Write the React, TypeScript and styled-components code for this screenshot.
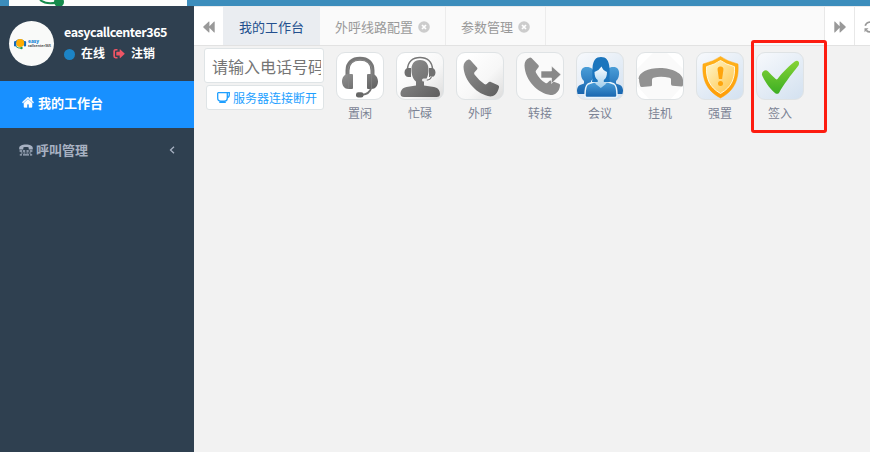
import React from 'react';
import styled, { createGlobalStyle, css } from 'styled-components';

const GlobalStyle = createGlobalStyle`
  * { box-sizing: border-box; }
  body {
    margin: 0;
    overflow: hidden;
    background: #f2f2f2;
    font-family: "Noto Sans", "Noto Sans CJK SC", sans-serif;
    font-size: 13px;
  }
  svg { display: block; flex: none; }
`;

const Page = styled.div`
  display: flex;
  flex-direction: column;
  width: 870px;
  height: 452px;
  overflow: hidden;
`;

const TopBar = styled.header`
  flex: none;
  height: 6px;
  padding-left: 9px;
  background: #3c8dbc;
`;

const LogoStrip = styled.div`
  width: 178px;
  height: 6px;
  padding-left: 30px;
  background: #fcfdfc;
`;

const Body = styled.div`
  display: flex;
  flex: 1;
  min-height: 0;
`;

const Sidebar = styled.aside`
  flex: none;
  width: 194px;
  background: #2f4050;
`;

const Profile = styled.div`
  display: flex;
  height: 75px;
  padding: 15px 0 0 9px;
`;

const Avatar = styled.div`
  flex: none;
  width: 45px;
  height: 45px;
  border-radius: 50%;
  background: #f9faf9;
`;

const ProfileText = styled.div`
  padding-left: 10px;
  color: #fff;
  font-weight: 600;
`;

const UserName = styled.div`
  height: 22px;
  line-height: 21px;
  font-family: "Noto Sans CJK SC", sans-serif;
  font-size: 12.5px;
  font-weight: 700;
  letter-spacing: -0.46px;
  white-space: nowrap;
`;

const StatusRow = styled.div`
  display: flex;
  align-items: center;
  height: 22px;
  font-size: 12px;
  line-height: 22px;
  white-space: nowrap;
`;

const StatusDot = styled.i`
  width: 11px;
  height: 11px;
  margin-right: 6px;
  border-radius: 50%;
  background: #1c84c6;
`;

const LogoutIcon = styled.span`
  margin: 0 6px 0 8px;
`;

const MenuItem = styled.div<{ $active?: boolean }>`
  display: flex;
  align-items: center;
  height: 47px;
  padding: 0 18px 4px 19px;
  color: #a7b1c2;
  font-weight: 600;
  gap: 3px;
  ${p => p.$active && css`
    padding: 0 22px 4px;
    gap: 4px;
    color: #fff;
    background: #1890ff;
  `}
`;

const MenuArrow = styled.span`
  margin-left: auto;
  margin-right: 1px;
`;

const Main = styled.main`
  flex: none;
  width: 676px;
`;

const TabBar = styled.nav`
  display: flex;
  height: 40px;
  background: #fafafa;
  border-top: 1px solid #e8eaec;
  border-bottom: 1px solid #e2e2e2;
  overflow: hidden;
`;

const ScrollButton = styled.button<{ $width: number; $edge?: boolean }>`
  display: flex;
  align-items: center;
  justify-content: center;
  flex: none;
  width: ${p => p.$width}px;
  height: 39px;
  padding: 0;
  border: 0;
  border-left: ${p => (p.$edge ? '1px solid #e8e8e8' : '0')};
  background: #fff;
  color: #999;
`;

const Tabs = styled.div`
  display: flex;
  flex: none;
  width: 601px;
`;

const Tab = styled.div<{ $active?: boolean }>`
  display: flex;
  align-items: center;
  gap: 5px;
  height: 39px;
  padding: 0 15px;
  border-right: 1px solid #ececec;
  color: #999;
  white-space: nowrap;
  ${p => p.$active && css`
    padding: 0 15px 0 16px;
    border-color: #eaedf1;
    color: #23508e;
    background: #eaedf1;
  `}
`;

const Toolbar = styled.section`
  display: flex;
  padding: 2px 0 0 10px;
`;

const DialColumn = styled.div`
  display: flex;
  flex-direction: column;
  align-items: flex-end;
  width: 120px;
  margin-right: 12px;
`;

const PhoneInput = styled.input`
  width: 120px;
  height: 35px;
  padding: 3px 2px 0 7px;
  border: 1px solid #dfe4e6;
  border-radius: 3px;
  outline: 0;
  background: #fff;
  font-family: inherit;
  font-size: 16px;
  &::placeholder { color: #757575; opacity: 1; }
`;

const ConnectionState = styled.div`
  display: flex;
  align-items: center;
  gap: 3px;
  width: 118px;
  height: 25px;
  margin-top: 2px;
  padding: 1px 0 0 10px;
  border: 1px solid #dfe4e6;
  border-radius: 3px;
  background: #fff;
  color: #1e9fff;
  font-size: 12px;
  white-space: nowrap;
`;

const Actions = styled.div`
  display: flex;
  gap: 12px;
  padding-top: 4px;
`;

const Action = styled.div`
  position: relative;
  width: 48px;
`;

const tones = {
  white: '#fff',
  gray: 'linear-gradient(135deg, #fff 15%, #f7f7f7 60%, #dcdcdc)',
  soft: '#fafafa',
  blue: 'linear-gradient(145deg, #f7f9fc, #d3e1f0)',
};

const ActionTile = styled.div<{ $tone: keyof typeof tones }>`
  width: 48px;
  height: 48px;
  border: 1px solid #dfe3e5;
  border-radius: 9px;
  overflow: hidden;
  background: ${p => tones[p.$tone]};
  & > svg { margin: -1px; }
`;

const ActionLabel = styled.div`
  height: 28px;
  line-height: 28px;
  text-align: center;
  color: #7b8294;
  font-size: 12px;
`;

const Highlight = styled.div`
  position: absolute;
  left: -5px;
  top: -12px;
  width: 76px;
  height: 93px;
  border: 3px solid #fd1c10;
  border-radius: 3px;
  pointer-events: none;
`;

const HomeIcon = () => (
  <svg width="12" height="11" viewBox="50 250 1692 1350" preserveAspectRatio="none" fill="currentColor" stroke="currentColor" strokeWidth="40">
    <path d="M1472 992v480q0 26-19 45t-45 19h-384v-384h-256v384h-384q-26 0-45-19t-19-45v-480q0-1 .5-3t.5-3l575-474 575 474q1 2 1 6zm223-69l-62 74q-8 9-21 11h-3q-13 0-21-7l-692-577-692 577q-12 8-24 7-13-2-21-11l-62-74q-8-10-7-23.5t11-21.5l719-599q32-26 76-26t76 26l244 204v-195q0-14 9-23t23-9h192q14 0 23 9t9 23v408l219 182q10 8 11 21.5t-7 23.5z" />
  </svg>
);

const TtyIcon = () => (
  <svg width="14" height="12" viewBox="0 0 14 12" fill="currentColor">
    <path d="M.2 4.200C.2 1.800 3 .6 7 .6s6.800 1.200 6.800 3.600v.7q0 .6-.6.6h-2.900q-.6 0-.6-.6V3.500C8 2.900 6 2.900 4.300 3.500v1.400q0 .6-.6.6H.8q-.6 0-.6-.6z" />
    <path d="M.6 6.300h2.600v1.500H.6zM4 6.300h2.200v1.500H4zM7.500 6.300h2.200v1.500H7.500zM10.800 6.300h2.600v1.500h-2.600zM1.800 8.400h1.800v1.200H1.800zM4.400 8.400h2v1.200h-2zM7.400 8.400h2v1.200h-2zM10.300 8.400h1.900v1.200h-1.900zM.8 10.200H3v1.400H.8zM4 10.200h6v1.400H4zM11 10.200h2.200v1.400H11z" />
  </svg>
);

const SignOutIcon = () => (
  <svg width="12" height="12" viewBox="0 0 12 12" fill="#ed5565">
    <path d="M4.500 1v1.500H2.900q-.9 0-.9.900v4.600q0 .9.900.9h1.600v1.500H2.600Q.3 10.400.3 8.300V3.100Q.3 1 2.600 1z" />
    <path d="M3.700 3.800h3V1.600q0-.7.600-.2l4.300 4q.3.300 0 .6l-4.300 4q-.6.500-.6-.2V7.600h-3q-.4 0-.4-.4v-3q0-.4.400-.4z" />
  </svg>
);

const DoubleArrow = ({ forward }: { forward?: boolean }) => (
  <svg width="12" height="12" viewBox="0 0 12 12" fill="currentColor">
    {forward
      ? <path d="M.3.8Q.3.200.9.600L5.600 5.200V.8q0-.6.600-.2l5.400 5q.3.400 0 .8l-5.400 5q-.6.400-.6-.2V6.800L.9 11.400q-.6.400-.6-.2z" />
      : <path d="M11.700.8q0-.6-.6-.2L6.400 5.200V.8q0-.6-.6-.2l-5.400 5q-.3.400 0 .8l5.400 5q.6.400.6-.2V6.800l4.700 4.600q.6.400.6-.2z" />}
  </svg>
);

const CloseIcon = () => (
  <svg width="12" height="12" viewBox="0 0 12 12">
    <circle cx="6" cy="6" r="5.800" fill="#ccc" />
    <path d="M4 4l4 4M8 4L4 8" stroke="#fff" strokeWidth="1.700" />
  </svg>
);

const RefreshIcon = () => (
  <svg width="12" height="12" viewBox="0 0 12 12" fill="none" stroke="currentColor" strokeWidth="1.700">
    <path d="M1.200 4.800A5 5 0 0 1 9.700 2.700M10.800 7.200A5 5 0 0 1 2.300 9.300" />
    <path d="M11.500.8v4h-4zM.5 11.200v-4h4z" fill="currentColor" stroke="none" />
  </svg>
);

const CupIcon = () => (
  <svg width="13" height="12" viewBox="0 0 13 12" fill="none" stroke="currentColor" strokeWidth="1.300">
    <path d="M.7 .7h11.600v2q0 2.600-2.500 3.300M10.300 .7v5.200q0 3.200-3 3.200H3.700q-3 0-3-3.200V.7M2.300 10.300h6.500" />
  </svg>
);

const AvatarLogo = () => (
  <svg width="45" height="45" viewBox="0 0 45 45">
    <path d="M6.400 22A5 5 0 0 1 15.600 22" fill="none" stroke="#166bb9" strokeWidth="1.300" />
    <rect x="5" y="20" width="2.500" height="5.500" rx="1.200" fill="#166bb9" />
    <rect x="14.800" y="20" width="2.300" height="5.500" rx="1.200" fill="#166bb9" />
    <circle cx="11.200" cy="22" r="4" fill="#ffad00" />
    <path d="M7 25.500q2 1.800 5 1.700" fill="none" stroke="#279757" />
    <circle cx="12.500" cy="27" r="1.200" fill="#279757" />
    <text x="19" y="22.300" fontSize="4.800" fontWeight="800" fill="#1684d5" textLength="11" lengthAdjust="spacingAndGlyphs">easy</text>
    <text x="19" y="26.400" fontSize="3.700" fontWeight="600" fill="#333" textLength="23" lengthAdjust="spacingAndGlyphs">callcenter365</text>
  </svg>
);

const Gradients = () => (
  <defs>
    <linearGradient id="gray" x1="0" y1="0" x2="1" y2="1">
      <stop stopColor="#929292" /><stop offset="1" stopColor="#5f5f5f" />
    </linearGradient>
    <linearGradient id="blue" x1="0" y1="0" x2="0" y2="1">
      <stop stopColor="#4b9ed8" /><stop offset="1" stopColor="#1764ae" />
    </linearGradient>
    <linearGradient id="face" x1="0" y1="0" x2="0" y2="1">
      <stop stopColor="#fafdff" /><stop offset="1" stopColor="#9fcdeb" />
    </linearGradient>
    <linearGradient id="gold" x1="0" y1="0" x2="0" y2="1">
      <stop stopColor="#ffb31b" /><stop offset="1" stopColor="#ff9d08" />
    </linearGradient>
    <linearGradient id="cream" x1="0" y1="0" x2="1" y2="1">
      <stop stopColor="#fff7cc" /><stop offset="1" stopColor="#ffc344" />
    </linearGradient>
    <linearGradient id="green" x1="0" y1="0" x2="0" y2="1">
      <stop stopColor="#86d335" /><stop offset="1" stopColor="#3cae24" />
    </linearGradient>
  </defs>
);

const Glyph = ({ children }: { children: React.ReactNode }) => (
  <svg width="48" height="48" viewBox="0 0 48 48">
    <Gradients />
    {children}
  </svg>
);

const actions: { label: string; tone: keyof typeof tones; marked?: boolean; art: React.ReactNode }[] = [
  {
    label: '置闲', tone: 'white', art: <>
      <path d="M11.500 24V18.500C11.500 10.800 16.500 6.800 24 6.800s12.500 4 12.500 11.700V24" fill="none" stroke="#777" strokeWidth="4" />
      <path d="M12 22.500v-4C12 12 17.500 7.800 24 7.800s12 4.200 12 10.700v4" fill="none" stroke="#999" strokeWidth=".6" />
      <path d="M12.500 22H16q1 0 1 1v13q0 1-1 1h-3.500C8.500 37 6 33.500 6 29.500s2.500-7.500 6.500-7.500zM35.500 22H32q-1 0-1 1v13q0 1 1 1h3.500c4 0 6.500-3.500 6.500-7.500S39.500 22 35.500 22z" fill="url(#gray)" />
      <path d="M12.500 22v15M35.500 22v15" stroke="#858585" strokeWidth=".7" />
      <path d="M35 36.500q-1.500 5.500-9 6.300" fill="none" stroke="#727272" strokeWidth="1.900" />
      <rect x="20" y="40.300" width="7.500" height="5.200" rx="2.300" fill="#666" />
    </>,
  },
  {
    label: '忙碌', tone: 'gray', art: <>
      <path d="M11.500 18C11.500 9.500 17 5.500 24 5.500S36.500 9.500 36.500 18" fill="none" stroke="#777" strokeWidth="1.500" />
      <path d="M24 8c-6.200 0-9 4.500-8.500 11 .4 5.500 2 8.500 4.500 10.500v4L10.500 35C6 36 4.500 39 4.500 42q0 3 3.500 3h32.500q3.500 0 3.500-3c0-3-1.500-6-6-7L28 33.500v-4c2.500-2 4.100-5 4.500-10.500C33 12.500 30.200 8 24 8z" fill="url(#gray)" />
      <path d="M12.500 16H15v9h-2.500C10 25 8.500 23 8.500 20.500S10 16 12.500 16zM35.500 16H33v9h2.500c2.500 0 4-2 4-4.500S38 16 35.500 16z" fill="#707070" />
      <path d="M35.500 24.500c-.5 2.700-3 3.700-6.500 3.800" fill="none" stroke="#fafafa" strokeWidth="2.600" />
      <path d="M35.500 24.500c-.5 2.700-3 3.700-6.500 3.800" fill="none" stroke="#777" strokeWidth="1.300" />
      <rect x="26" y="26.500" width="5" height="3" rx="1.500" fill="#eee" />
    </>,
  },
  {
    label: '外呼', tone: 'gray', art: <path d="M14.300 8L21 15.500q.8 1 0 2l-2.500 2.800q-.7 1 0 2.200Q23 28.500 28.300 32q1.400.9 2.400 0l1.600-1.600q.9-.9 2-.6l7.800 3.500q1.400.7.900 2.200C41.500 41 39 44.500 34.500 44.500 21.500 43 8 29 7.500 14.800c0-3.800 2-6 5-7.200q1-.4 1.800.4z" fill="url(#gray)" />,
  },
  {
    label: '转接', tone: 'soft', art: <>
      <path d="M15.500 6L22.500 13.300q.8 1 0 2l-2.500 3.200q-.7.900 0 2.200Q24 28 29.500 31q1.300.6 2.300-.4l1.500-1.500q.8-.8 2-.4l7.800 3q1.200.6.900 2C43.300 39.500 39.500 43 34.500 43 22 41.500 9 28.500 8.500 13.500c0-3.500 1.500-6.300 5-7.700q1.100-.6 2 .2z" fill="#8c8c8c" />
      <path d="M25 19h10.500v-5l9.500 8.500-9.500 9V26H25z" fill="#888" stroke="#fafafa" strokeWidth=".6" />
    </>,
  },
  {
    label: '会议', tone: 'blue', art: <>
      <path d="M10.500 15C6 15 4.500 18.500 5 22.500c.2 3 1.200 4.900 3 6.500v2.500L4 33c-2.500 1-3.500 4.500-3 9h14V29c2-2 3-4 3-7 0-4.500-2.500-7-7.500-7zM37.500 15c4.500 0 6 3.500 5.500 7.500-.2 3-1.200 4.900-3 6.500v2.500l4 1.500c2.500 1 3.500 4.500 3 9H33V29c-2-2-3-4-3-7 0-4.500 2.500-7 7.500-7z" fill="url(#blue)" />
      <path d="M17.500 30L12 32q-3 2-3 11.500 0 2 2 2h28q2 0 2-2Q41 34 38 32l-5.500-2z" fill="url(#blue)" stroke="#e9f4fc" strokeWidth="1.500" />
      <path d="M16 30c1-4 0-7 .5-14C17 8 20 5 25 5s8 3 8.500 11c.4 7-.5 10 .5 14z" fill="#1b75bd" />
      <path d="M18.500 20q4.500-1.500 7-5.500 1.500 4 5.500 5.500c0 4-1 6.500-3.200 8v2.500l2.700 1-5.700 4.500-5.800-4.500 2.700-1V28c-2.200-1.500-3.200-4-3.200-8z" fill="url(#face)" />
    </>,
  },
  {
    label: '挂机', tone: 'white', art: <>
      <path d="M0 18L18 0h12l18 18v14L34 48H14L0 33z" fill="#fafafa" />
      <path d="M2.500 27C2.500 20.500 12 16 24 16s23 5.500 23 12v5q0 1.500-1.500 1.500l-9-.8q-1.500-.2-1.500-1.700v-4.500q0-1.500-1.500-1.800-9-2-16 0-1.500.4-1.500 2V33q0 1.200-1.500 1.300l-8.500.8q-1.500.1-1.900-1.300-1.100-3.400-1.100-6.800z" fill="#929292" />
    </>,
  },
  {
    label: '强置', tone: 'blue', art: <>
      <path d="M24.500 4.500Q31.500 9.500 42 12C43 25 40 38 24.500 46 9 38 6 25 7 12q10.500-2.500 17.500-7.500z" fill="url(#gold)" stroke="#ffa50d" strokeWidth=".5" />
      <path d="M24.500 8.500Q30 12.500 38.500 14.700C39 26 36 35 24.500 41.500 13 35 10 26 10.500 14.700q8.500-2.200 14-6.200z" fill="url(#cream)" stroke="#fff8db" strokeWidth="1" />
      <path d="M24.500 14.500c2.200 0 3.200 1.500 2.900 3.500l-1.300 9h-3.200l-1.300-9c-.3-2 .7-3.500 2.900-3.500z" fill="#ffa50c" />
      <circle cx="24.500" cy="31.500" r="2.500" fill="#ffa50c" />
    </>,
  },
  {
    label: '签入', tone: 'blue', marked: true, art: <path d="M8.500 18.500Q5.500 19.800 6 23c2 5 7 13 13 18q2 1.700 4 0C27 33.500 34 24 42.500 13.500q1-2 .3-3.500-1.300-2-4-.5C30 16.500 25 22.500 21.500 27q-.8.900-1.800 0-4-3.500-7.500-7.500-1.700-1.700-3.700-1z" fill="url(#green)" />,
  },
];

export default function App() {
  return (
    <>
      <GlobalStyle />
      <Page>
        <TopBar>
          <LogoStrip>
            <svg width="30" height="6" viewBox="0 0 30 6">
              <path d="M1 0Q8 5 17 2.500" fill="none" stroke="#158b4c" strokeWidth="2" />
              <circle cx="20" cy="2" r="5" fill="#158b4c" />
            </svg>
          </LogoStrip>
        </TopBar>
        <Body>
          <Sidebar>
            <Profile>
              <Avatar><AvatarLogo /></Avatar>
              <ProfileText>
                <UserName>easycallcenter365</UserName>
                <StatusRow>
                  <StatusDot />在线
                  <LogoutIcon><SignOutIcon /></LogoutIcon>注销
                </StatusRow>
              </ProfileText>
            </Profile>
            <MenuItem $active><HomeIcon />我的工作台</MenuItem>
            <MenuItem>
              <TtyIcon />呼叫管理
              <MenuArrow>
                <svg width="6" height="8" viewBox="0 0 6 8" fill="none" stroke="currentColor" strokeWidth="1.300"><path d="M5 .7L1.500 4 5 7.300" /></svg>
              </MenuArrow>
            </MenuItem>
          </Sidebar>
          <Main>
            <TabBar>
              <ScrollButton $width={29}><DoubleArrow /></ScrollButton>
              <Tabs>
                <Tab $active>我的工作台</Tab>
                <Tab>外呼线路配置<CloseIcon /></Tab>
                <Tab>参数管理<CloseIcon /></Tab>
              </Tabs>
              <ScrollButton $width={30} $edge><DoubleArrow forward /></ScrollButton>
              <ScrollButton $width={30} $edge><RefreshIcon /></ScrollButton>
            </TabBar>
            <Toolbar>
              <DialColumn>
                <PhoneInput placeholder="请输入电话号码" />
                <ConnectionState><CupIcon />服务器连接断开</ConnectionState>
              </DialColumn>
              <Actions>
                {actions.map(a => (
                  <Action key={a.label}>
                    <ActionTile $tone={a.tone}><Glyph>{a.art}</Glyph></ActionTile>
                    <ActionLabel>{a.label}</ActionLabel>
                    {a.marked && <Highlight />}
                  </Action>
                ))}
              </Actions>
            </Toolbar>
          </Main>
        </Body>
      </Page>
    </>
  );
}
